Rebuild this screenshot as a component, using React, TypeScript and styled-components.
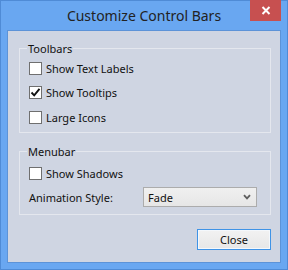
import * as React from 'react';
import styled, { createGlobalStyle } from 'styled-components';

const GlobalStyle = createGlobalStyle`
	html, body {
		margin: 0;
		padding: 0;
		background: #fff;
	}
	body {
		font-family: "Noto Sans", "DejaVu Sans", sans-serif;
		color: #111;
	}
`;

const Window = styled.div`
	width: 288px;
	height: 270px;
	box-sizing: border-box;
	background: #69a7f1;
	border: 1px solid #4f8bd6;
	padding: 0 6px 6px 6px;
	display: flex;
	flex-direction: column;
`;

const TitleBar = styled.div`
	height: 29px;
	flex: none;
	display: grid;
	grid-template-columns: 1fr auto 1fr;
	align-items: center;
`;

const Title = styled.span`
	grid-column: 2;
	font-size: 14px;
	color: #222;
	line-height: 29px;
`;

const CloseButton = styled.div`
	grid-column: 3;
	justify-self: end;
	align-self: start;
	margin-top: -1px;
	width: 31px;
	height: 21px;
	background: #c75050;
	display: flex;
	align-items: center;
	justify-content: center;
`;

const Client = styled.div`
	flex: 1;
	background: #cfd5e2;
	border: 1px solid #5c93d8;
	padding: 10px 9px 0 11px;
	display: flex;
	flex-direction: column;
`;

const Group = styled.fieldset<{ $top?: number }>`
	margin: ${p => p.$top || 0}px 0 0 0;
	border: 1px solid #e4e7ee;
	padding: 0 0 ${p => (p.$top ? 5 : 2.5)}px 9px;
	min-width: 0;
`;

const Legend = styled.legend`
	font-size: 11px;
	line-height: 15px;
	height: 15px;
	padding: 0 1px;
	margin-left: -2px;
`;

const Rows = styled.div<{ $offset?: number }>`
	padding-top: ${p => p.$offset || 0}px;
	display: flex;
	flex-direction: column;
`;

const Row = styled.div<{ $h: number }>`
	height: ${p => p.$h}px;
	display: flex;
	align-items: center;
	font-size: 11px;
`;

const Box = styled.span`
	width: 13px;
	height: 13px;
	box-sizing: border-box;
	border: 1px solid #6f6f6f;
	background: #fff;
	margin-right: 4px;
	display: flex;
	align-items: center;
	justify-content: center;
`;

const FieldLabel = styled.span`
	width: 114px;
`;

const Dropdown = styled.div`
	width: 114px;
	height: 20px;
	box-sizing: border-box;
	border: 1px solid #acacac;
	background: linear-gradient(#f0f0f0, #e6e6e6);
	display: flex;
	align-items: center;
	justify-content: space-between;
	padding: 0 5px 0 4px;
	font-size: 11px;
`;

const ButtonRow = styled.div`
	display: flex;
	justify-content: flex-end;
	margin-top: 14px;
`;

const Button = styled.div`
	width: 74px;
	height: 21px;
	box-sizing: border-box;
	border: 1px solid #3f93e6;
	box-shadow: inset 0 0 0 1px #f4f8fc;
	background: linear-gradient(#f2f2f2, #e7e7e7);
	font-size: 11px;
	display: flex;
	align-items: center;
	justify-content: center;
`;

const Check = ({ checked }: { checked?: boolean }) => (
	<Box>
		{checked && (
			<svg width="11" height="11" viewBox="0 0 11 11">
				<path d="M1.5 5.5 L4.2 8.3 L9.5 1.8" fill="none" stroke="#111" strokeWidth="1.9" />
			</svg>
		)}
	</Box>
);

const App: React.FC = () => (
	<>
		<GlobalStyle />
		<Window>
			<TitleBar>
				<Title>Customize Control Bars</Title>
				<CloseButton>
					<svg width="10" height="9" viewBox="0 0 10 9">
						<path d="M1.5 1 L8.5 8 M8.5 1 L1.5 8" stroke="#fff" strokeWidth="2" />
					</svg>
				</CloseButton>
			</TitleBar>
			<Client>
				<Group>
					<Legend>Toolbars</Legend>
					<Rows>
						<Row $h={24.5}><Check />Show Text Labels</Row>
						<Row $h={24.5}><Check checked />Show Tooltips</Row>
						<Row $h={24.5}><Check />Large Icons</Row>
					</Rows>
				</Group>
				<Group $top={11}>
					<Legend>Menubar</Legend>
					<Rows $offset={2}>
						<Row $h={24}><Check />Show Shadows</Row>
						<Row $h={24}>
							<FieldLabel>Animation Style:</FieldLabel>
							<Dropdown>
								<span>Fade</span>
								<svg width="8" height="6" viewBox="0 0 8 6">
									<path d="M1 1.2 L4 4.4 L7 1.2" fill="none" stroke="#5e5e5e" strokeWidth="1.8" />
								</svg>
							</Dropdown>
						</Row>
					</Rows>
				</Group>
				<ButtonRow>
					<Button>Close</Button>
				</ButtonRow>
			</Client>
		</Window>
	</>
);

export default App;
